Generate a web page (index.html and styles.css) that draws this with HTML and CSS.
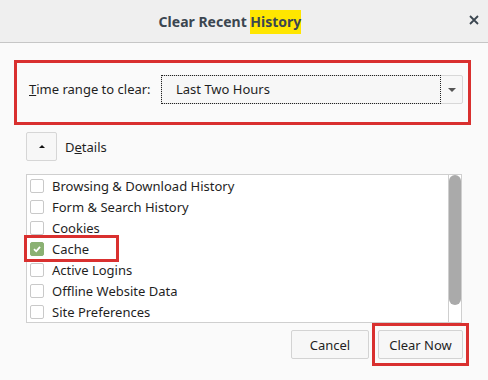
FILE: index.html
```html
<!DOCTYPE html>
<html lang="en">
<head>
    <meta charset="UTF-8">
    <title>Clear Recent History</title>
    <link rel="stylesheet" href="styles.css">
</head>
<body>
    <div class="dialog">
        <div class="titlebar">
            <div class="title">Clear Recent <span class="mark">History</span></div>
            <button class="close" aria-label="Close">
                <svg width="10" height="10" viewBox="0 0 10 10">
                    <path d="M1 1 L9 9 M9 1 L1 9" />
                </svg>
            </button>
        </div>

        <main>
            <div class="range-box">
                <label class="range-label"><u>T</u>ime range to clear:</label>
                <div class="select">
                    <div class="select-value">Last Two Hours</div>
                    <div class="select-arrow"></div>
                </div>
            </div>

            <div class="details-row">
                <button class="details-toggle"><span class="up"></span></button>
                <span>D<u>e</u>tails</span>
            </div>

            <div class="list">
                <div class="items">
                    <div class="item"><span class="check"></span>Browsing &amp; Download History</div>
                    <div class="item"><span class="check"></span>Form &amp; Search History</div>
                    <div class="item"><span class="check"></span>Cookies</div>
                    <div class="item marked"><span class="check checked">
                        <svg width="10" height="10" viewBox="0 0 10 10"><path d="M2 5.2 L4.2 7.3 L8 2.8" /></svg>
                    </span>Cache</div>
                    <div class="item"><span class="check"></span>Active Logins</div>
                    <div class="item"><span class="check"></span>Offline Website Data</div>
                    <div class="item"><span class="check"></span>Site Preferences</div>
                </div>
                <div class="scrollbar">
                    <div class="thumb"></div>
                </div>
            </div>

            <div class="actions">
                <button class="btn cancel">Cancel</button>
                <div class="marked-wrap">
                    <button class="btn clear">Clear Now</button>
                </div>
            </div>
        </main>
    </div>
</body>
</html>
```

FILE: styles.css
```css
:root {
    --text-color: #1f1f1f;
    --border-color: #cfcfcf;
    --annotation: #d9302f;
}

body {
    margin: 0;
    font-family: "Noto Sans", "Open Sans", sans-serif;
    font-size: 13px;
    color: var(--text-color);
    background-color: #fafafa;
}

.dialog {
    width: 488px;
    height: 380px;
}

.titlebar {
    height: 42px;
    background-color: #efefef;
    border-bottom: 1px solid #c6c6c6;
    display: flex;
    align-items: center;
    justify-content: center;
    position: relative;
}

.title {
    font-weight: bold;
    font-size: 14px;
    color: #3b4650;
    margin: 1px 28px 0 0;
}

.mark {
    background-color: #ffe600;
    padding: 2px 0 3px;
}

.close {
    position: absolute;
    right: 9px;
    top: 15px;
    border: none;
    background: none;
    padding: 0;
    width: 10px;
    height: 10px;
    display: flex;
}

.close path {
    stroke: #3b4650;
    stroke-width: 1.8;
}

main {
    padding: 17px 17px 0 14px;
}

.range-box {
    border: 3px solid var(--annotation);
    padding: 12px 5px 0 12px;
    display: flex;
    align-items: flex-start;
    box-sizing: border-box;
    height: 65px;
}

.range-label {
    width: 132px;
    line-height: 29px;
}

.select {
    flex: 1;
    height: 29px;
    box-sizing: border-box;
    border: 1px solid #d8d8d8;
    border-radius: 2px;
    display: flex;
    background-color: #f7f7f7;
}

.select-value {
    flex: 1;
    border: 1px dotted #222;
    margin: -1px 0 -1px -1px;
    padding-left: 14px;
    line-height: 27px;
}

.select-arrow {
    width: 21px;
    display: flex;
    align-items: center;
    justify-content: center;
}

.select-arrow::before {
    content: "";
    border-left: 4px solid transparent;
    border-right: 4px solid transparent;
    border-top: 4px solid #555;
}

.details-row {
    display: flex;
    align-items: center;
    gap: 8px;
    margin: 7px 0 0 12px;
}

.details-toggle {
    width: 31px;
    height: 29px;
    border: 1px solid #d6d6d6;
    border-radius: 2px;
    background-color: #f7f7f7;
    display: flex;
    align-items: center;
    justify-content: center;
    padding: 0;
}

.up {
    border-left: 3px solid transparent;
    border-right: 3px solid transparent;
    border-bottom: 3px solid #111;
}

.list {
    margin: 13px 9px 0 12px;
    height: 149px;
    box-sizing: border-box;
    border: 1px solid var(--border-color);
    background-color: #fff;
    display: flex;
}

.items {
    flex: 1;
}

.item {
    height: 21px;
    display: flex;
    align-items: center;
    padding-left: 3px;
}

.check {
    width: 14px;
    height: 14px;
    box-sizing: border-box;
    border: 1px solid #c9c9c9;
    border-radius: 2px;
    background-color: #fff;
    margin-right: 8px;
    display: flex;
    align-items: center;
    justify-content: center;
}

.check.checked {
    background-color: #8bb173;
    border-color: #8bb173;
}

.check path {
    fill: none;
    stroke: #fff;
    stroke-width: 1.8;
}

.item.marked {
    width: 86px;
    outline: 3px solid var(--annotation);
}

.scrollbar {
    width: 12px;
    border-left: 1px solid var(--border-color);
}

.thumb {
    height: 130px;
    background-color: #aaaaaa;
    border-radius: 6px;
}

.actions {
    display: flex;
    justify-content: flex-end;
    align-items: center;
    gap: 3px;
    margin-right: 2px;
}

.btn {
    height: 29px;
    padding: 0;
    font-family: inherit;
    font-size: 13px;
    color: var(--text-color);
    background-color: #f7f7f7;
    border: 1px solid #d3d3d3;
    border-radius: 2px;
}

.cancel {
    width: 78px;
}

.clear {
    width: 85px;
    display: block;
}

.marked-wrap {
    border: 3px solid var(--annotation);
    padding: 4px 3px;
}
```
